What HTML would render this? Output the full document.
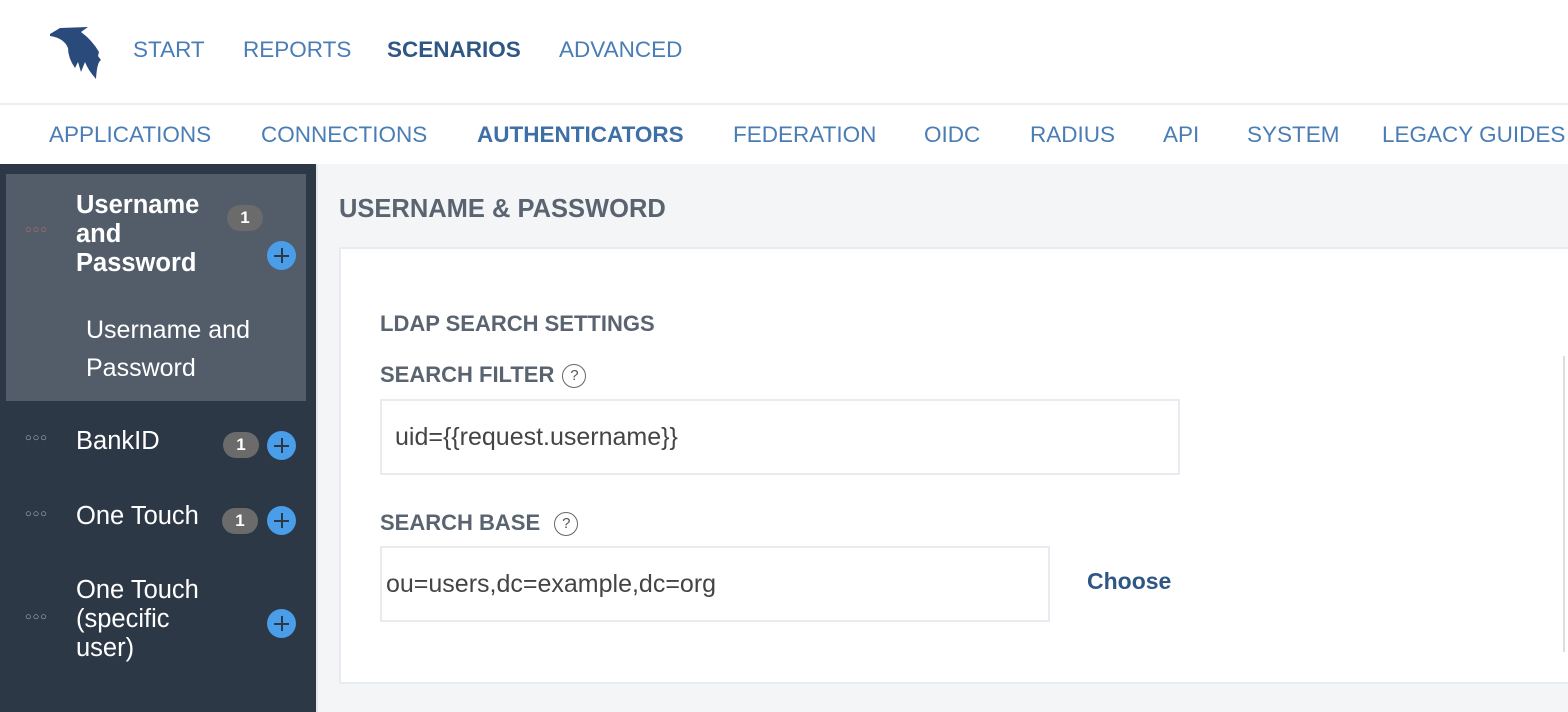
<!DOCTYPE html><html><head><style>
body{margin:0;width:1568px;height:712px;overflow:hidden;font-family:"Liberation Sans",sans-serif;background:#f4f5f7;position:relative}
.a{position:absolute;white-space:nowrap}
.n1{font-size:22.5px;color:#4a7db5;top:37px}
.n2{font-size:22.5px;color:#4a7db5;top:122px}
.sb{color:#fff;font-size:25.5px}
.dots{color:#bbb;font-size:11px;letter-spacing:1px}
.badge{background:#6b6b6b;color:#fff;font-weight:bold;font-size:17px;border-radius:13px;width:36px;height:26px;text-align:center;line-height:26px}
.plus{width:29px;height:29px;border-radius:50%;background:#4a9de8}
.plus:before{content:"";position:absolute;left:7px;top:14px;width:15px;height:1.5px;background:#2d3846}
.plus:after{content:"";position:absolute;left:14px;top:7px;width:1.5px;height:15px;background:#2d3846}
.lbl{font-size:22px;color:#5a6470;font-weight:bold}
.q{display:inline-block;width:22px;height:22px;border:1.5px solid #666;border-radius:50%;font-size:15px;text-align:center;line-height:22px;color:#555;font-weight:normal;vertical-align:middle;margin-left:8px}
.inp{border:2px solid #e8ecf0;background:#fff;font-size:25px;color:#444;box-sizing:border-box;padding-left:13px}
</style></head><body>
<div class="a" style="left:0;top:0;width:1568px;height:103px;background:#fff;border-bottom:2px solid #eceef0"></div>
<div class="a" style="left:0;top:105px;width:1568px;height:59px;background:#fff"></div>
<svg class="a" style="left:48px;top:26px" width="56" height="54" viewBox="0 0 56 54"><path d="M2 8 L12 2 L40 1 L33 6 Q44 14 51 26 L50 30 L53 34 Q49 36 48 53 Q40 44 37 36 L33 46 L30 36 L27 42 Q20 32 20 22 Q16 12 2 10Z" fill="#2b4a7c"/></svg>
<div class="a n1" style="left:133px">START</div>
<div class="a n1" style="left:243px">REPORTS</div>
<div class="a n1" style="left:387px;color:#2f5785;font-weight:bold">SCENARIOS</div>
<div class="a n1" style="left:559px">ADVANCED</div>
<div class="a n2" style="left:49px">APPLICATIONS</div>
<div class="a n2" style="left:261px">CONNECTIONS</div>
<div class="a n2" style="left:477px;color:#3e6fa6;font-weight:bold">AUTHENTICATORS</div>
<div class="a n2" style="left:733px">FEDERATION</div>
<div class="a n2" style="left:924px">OIDC</div>
<div class="a n2" style="left:1030px">RADIUS</div>
<div class="a n2" style="left:1163px">API</div>
<div class="a n2" style="left:1247px">SYSTEM</div>
<div class="a n2" style="left:1382px">LEGACY GUIDES</div>
<div class="a" style="left:0;top:164px;width:316px;height:548px;background:#2d3846;border-right:2px solid #e4e6e9"></div>
<div class="a" style="left:6px;top:174px;width:300px;height:227px;background:#535d6a"></div>
<div class="a dots" style="left:25px;top:224px;color:#d06a6a">○○○</div>
<div class="a sb" style="left:76px;top:191px;font-weight:bold;line-height:29px">Username<br>and<br>Password</div>
<div class="a badge" style="left:227px;top:205px">1</div>
<div class="a plus" style="left:267px;top:241px"></div>
<div class="a sb" style="left:86px;top:311px;line-height:38px;font-size:25px">Username and<br>Password</div>
<div class="a dots" style="left:25px;top:432px">○○○</div>
<div class="a sb" style="left:76px;top:427px">BankID</div>
<div class="a badge" style="left:223px;top:432px">1</div>
<div class="a plus" style="left:267px;top:431px"></div>
<div class="a dots" style="left:25px;top:508px">○○○</div>
<div class="a sb" style="left:76px;top:502px">One Touch</div>
<div class="a badge" style="left:222px;top:508px">1</div>
<div class="a plus" style="left:267px;top:506px"></div>
<div class="a dots" style="left:25px;top:611px">○○○</div>
<div class="a sb" style="left:76px;top:576px;line-height:29px">One Touch<br>(specific<br>user)</div>
<div class="a plus" style="left:267px;top:609px"></div>
<div class="a" style="left:339px;top:195px;font-size:25.5px;font-weight:bold;color:#5a6470">USERNAME &amp; PASSWORD</div>
<div class="a" style="left:339px;top:247px;width:1240px;height:437px;background:#fff;border:2px solid #e8ecf0;box-sizing:border-box"></div>
<div class="a" style="left:1563px;top:356px;width:2px;height:296px;background:#ddd"></div>
<div class="a lbl" style="left:380px;top:311px">LDAP SEARCH SETTINGS</div>
<div class="a lbl" style="left:380px;top:362px">SEARCH FILTER<span class="q">?</span></div>
<div class="a inp" style="left:380px;top:399px;width:800px;height:76px;line-height:72px">uid={{request.username}}</div>
<div class="a lbl" style="left:380px;top:510px">SEARCH BASE <span class="q">?</span></div>
<div class="a inp" style="left:380px;top:546px;width:670px;height:76px;line-height:72px;padding-left:4px">ou=users,dc=example,dc=org</div>
<div class="a" style="left:1087px;top:568px;font-size:23px;color:#2f5785;font-weight:bold">Choose</div>
</body></html>
